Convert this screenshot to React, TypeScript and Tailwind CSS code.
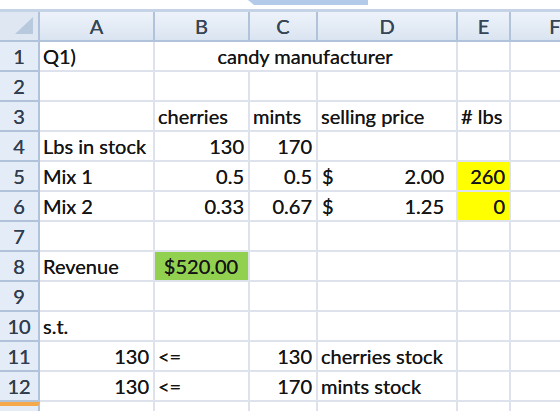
import React from 'react';

type Cell = {
  text?: string;
  align?: 'left' | 'right' | 'center';
  span?: number;
  bg?: string;
  acct?: string; // accounting format value, "$" drawn on the left
};

const COLS = ['A', 'B', 'C', 'D', 'E', 'F'];
const COL_WIDTHS = 'grid-cols-[40px_115px_95px_68px_140px_53px_90px]';

const ROWS: Cell[][] = [
  [{ text: 'Q1)' }, { text: 'candy manufacturer', align: 'center', span: 3 }, {}, {}],
  [{}, {}, {}, {}, {}, {}],
  [{}, { text: 'cherries' }, { text: 'mints' }, { text: 'selling price' }, { text: '# lbs' }, {}],
  [{ text: 'Lbs in stock' }, { text: '130', align: 'right' }, { text: '170', align: 'right' }, {}, {}, {}],
  [
    { text: 'Mix 1' },
    { text: '0.5', align: 'right' },
    { text: '0.5', align: 'right' },
    { acct: '2.00' },
    { text: '260', align: 'right', bg: 'yellow' },
    {},
  ],
  [
    { text: 'Mix 2' },
    { text: '0.33', align: 'right' },
    { text: '0.67', align: 'right' },
    { acct: '1.25' },
    { text: '0', align: 'right', bg: 'yellow' },
    {},
  ],
  [{}, {}, {}, {}, {}, {}],
  [{ text: 'Revenue' }, { text: '$520.00', align: 'center', bg: 'green' }, {}, {}, {}, {}],
  [{}, {}, {}, {}, {}, {}],
  [{ text: 's.t.' }, {}, {}, {}, {}, {}],
  [{ text: '130', align: 'right' }, { text: '<=' }, { text: '130', align: 'right' }, { text: 'cherries stock' }, {}, {}],
  [{ text: '130', align: 'right' }, { text: '<=' }, { text: '170', align: 'right' }, { text: 'mints stock' }, {}, {}],
];

function GridCell({ cell }: { cell: Cell }) {
  const bg =
    cell.bg === 'yellow' ? 'bg-[#ffff00]' : cell.bg === 'green' ? 'bg-[#92d050]' : 'bg-white';
  const align =
    cell.align === 'right' ? 'justify-end' : cell.align === 'center' ? 'justify-center' : 'justify-start';
  const span = cell.span === 3 ? 'col-span-3' : '';

  if (cell.acct) {
    return (
      <div className={`flex items-center justify-between border-r-2 border-b-2 border-[#dde2ec] bg-white pl-[4px] pr-[12px] ${span}`}>
        <span>$</span>
        <span>{cell.acct}</span>
      </div>
    );
  }

  return (
    <div className={`flex items-center whitespace-nowrap border-r-2 border-b-2 border-[#dde2ec] pl-[3px] pr-[4px] ${bg} ${align} ${span}`}>
      {cell.text}
    </div>
  );
}

export default function App() {
  return (
    <div className="h-[411px] w-[560px] overflow-hidden bg-white font-['Lato','Noto_Sans',sans-serif] text-[20px] leading-none text-[#141414] [text-shadow:0_0_0.6px_#333]">
      {/* formula-bar edge strip */}
      <div className="relative h-[12px] border-b-[3px] border-[#c5d3e6] bg-white">
        <div className="absolute left-[248px] top-0 h-[5px] w-[120px] bg-[#b3cbe9] [clip-path:polygon(0_0,100%_0,100%_100%,5%_100%)]" />
      </div>

      <div className={`grid ${COL_WIDTHS} auto-rows-[30px]`}>
        {/* column header row */}
        <div className="relative border-r-2 border-b-2 border-[#b0c3da] bg-[#dfe7f2]">
          <div className="absolute bottom-[6px] right-[5px] h-0 w-0 border-b-[17px] border-l-[18px] border-b-[#b8c9de] border-l-transparent" />
        </div>
        {COLS.map((c) => (
          <div
            key={c}
            className="flex items-center justify-center border-r-2 border-b-2 border-[#b0c3da] bg-gradient-to-b from-[#eef3fa] to-[#dae4f1] text-[#36465a]"
          >
            {c}
          </div>
        ))}

        {ROWS.map((row, r) => (
          <React.Fragment key={r}>
            <div className="flex items-center justify-center border-r-2 border-b-2 border-[#b0c3da] bg-[#e4ecf7] text-[#2f3e52]">
              {r + 1}
            </div>
            {row.map((cell, i) => (
              <GridCell key={i} cell={cell} />
            ))}
          </React.Fragment>
        ))}

        {/* next row, cut off */}
        <div className="border-r-2 border-[#b0c3da] border-t-[4px] border-t-[#f5a94a] bg-[#e4ecf7]" />
        {COLS.map((c) => (
          <div key={c} className="border-r-2 border-[#dde2ec] bg-white" />
        ))}
      </div>
    </div>
  );
}
